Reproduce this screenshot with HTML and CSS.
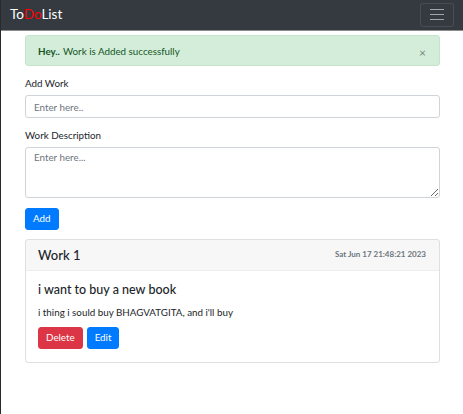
FILE: index.html
```html
<!DOCTYPE html>
<html>
<head>
<meta charset="utf-8">
<link rel="stylesheet" href="styles.css">
</head>
<body>
<div class="page">
  <nav class="navbar">
    <a class="brand">To<span class="red">Do</span>List</a>
    <button class="toggler"><span></span><span></span><span></span></button>
  </nav>
  <main class="container">
    <div class="alert"><strong>Hey..</strong> Work is Added successfully<span class="close">×</span></div>
    <form class="form">
      <label class="label">Add Work</label>
      <input class="input" type="text" placeholder="Enter here..">
      <label class="label label-2">Work Description</label>
      <textarea class="input textarea" placeholder="Enter here..."></textarea>
      <button type="button" class="btn btn-primary">Add</button>
    </form>
    <div class="card">
      <div class="card-header">
        <h5 class="card-head-title">Work 1</h5>
        <span class="date">Sat Jun 17 21:48:21 2023</span>
      </div>
      <div class="card-body">
        <h5 class="card-title">i want to buy a new book</h5>
        <p class="card-text">i thing i sould buy BHAGVATGITA, and i'll buy</p>
        <div class="actions">
          <button class="btn btn-danger">Delete</button>
          <button class="btn btn-primary">Edit</button>
        </div>
      </div>
    </div>
  </main>
</div>
</body>
</html>
```
FILE: styles.css
```css
* { box-sizing: border-box; }
html, body { margin: 0; padding: 0; height: 100%; }
body {
  font-family: Lato, "Open Sans", sans-serif;
  font-size: 9.8px;
  color: #212529;
  background: #fff;
}
.page {
  min-height: 100%;
  border-left: 1px solid #2a2a2a;
}
.navbar {
  height: 31px;
  background: #343a40;
  border-bottom: 1px solid #8c8c8c;
  display: flex;
  align-items: center;
  justify-content: space-between;
  padding: 0 9px 1px 9px;
}
.brand {
  color: #fff;
  font-size: 13.5px;
  line-height: 1;
}
.red { color: #ff0000; }
.toggler {
  width: 34px;
  height: 24px;
  border: 1px solid rgba(255,255,255,.1);
  border-radius: 3px;
  background: transparent;
  display: flex;
  flex-direction: column;
  align-items: center;
  justify-content: center;
  gap: 3.5px;
  padding: 0;
}
.toggler span {
  display: block;
  width: 14px;
  height: 1.5px;
  background: rgba(255,255,255,.55);
}
.container {
  padding: 4px 23px 0 24px;
}
.alert {
  position: relative;
  height: 31px;
  background: #d4edda;
  border: 1px solid #c3e6cb;
  border-radius: 3px;
  color: #155724;
  padding: 0 12px;
  display: flex;
  align-items: center;
  margin-bottom: 11px;
}
.alert strong { font-weight: 700; margin-right: 3px; }
.close {
  position: absolute;
  right: 13px;
  top: 11px;
  font-size: 12px;
  line-height: 1;
  color: #000;
  opacity: .45;
}
.form { display: flex; flex-direction: column; align-items: flex-start; }
.label { line-height: 12px; margin-bottom: 6px; }
.label-2 { margin-top: 11px; margin-bottom: 6px; }
.input {
  width: 100%;
  height: 23px;
  border: 1px solid #ced4da;
  border-radius: 3px;
  padding: 0 8px;
  font: inherit;
  color: #495057;
}
.input::placeholder { color: #6c757d; }
.textarea {
  height: 51px;
  padding: 3px 8px;
  resize: vertical;
}
.btn {
  font: inherit;
  color: #fff;
  border: 1px solid transparent;
  border-radius: 3px;
  height: 22px;
  padding: 0 7px;
  line-height: 1;
}
.form .btn { margin-top: 10px; }
.btn-primary { background: #007bff; border-color: #007bff; }
.btn-danger { background: #dc3545; border-color: #dc3545; }
.card {
  margin-top: 9px;
  border: 1px solid rgba(0,0,0,.125);
  border-radius: 3px;
  overflow: hidden;
}
.card-header {
  height: 31px;
  background: rgba(0,0,0,.03);
  border-bottom: 1px solid rgba(0,0,0,.04);
  display: flex;
  justify-content: space-between;
  align-items: flex-start;
  padding: 0 13px 0 12px;
}
.card-head-title {
  margin: 0;
  font-size: 13px;
  font-weight: 500;
  line-height: 13px;
  padding-top: 9px;
}
.date {
  font-size: 8px;
  font-weight: 700;
  color: #6c757d;
  padding-top: 9px;
}
.card-body { padding: 11px 12px 13px 12px; }
.card-title {
  margin: 0 0 8px 0;
  font-size: 12.5px;
  font-weight: 500;
  line-height: 15px;
}
.card-text { margin: 0 0 7px 0; line-height: 15px; }
.actions { display: flex; gap: 4px; }
```
